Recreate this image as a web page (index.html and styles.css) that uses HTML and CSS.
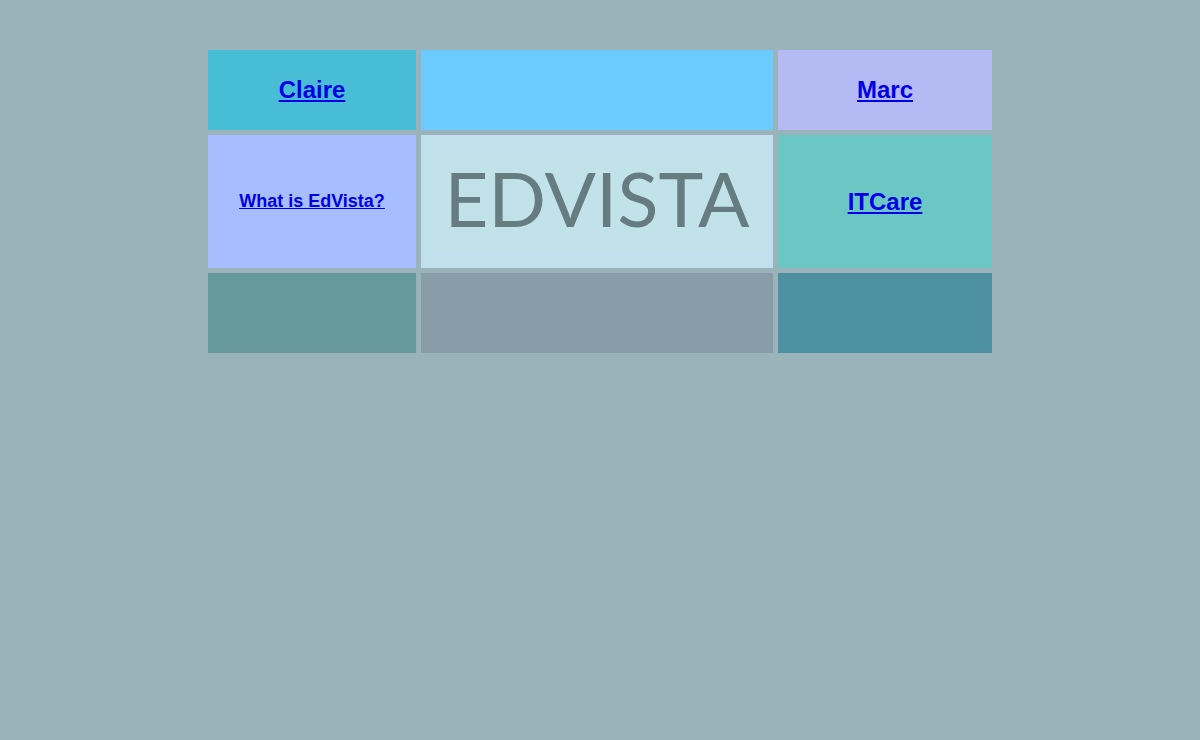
FILE: index.html
```html
<!DOCTYPE html>
<html lang="en">
<head>
    <meta charset="UTF-8">
    <meta name="viewport" content="width=device-width, initial-scale=1.0">
    <title>EdVista</title>
    <link rel="stylesheet" href="styles.css">
</head>
<body>

<div class="container">
    <!-- First row -->
    <div class="box claire"><h2><a href="claire.html">Claire</a></h2></div>
    <div class="box sky"></div>
    <div class="box marc"><h2><a href="marc.html">Marc</a></h2></div>

    <!-- Middle row with the logo -->
    <div class="box about"><h3><a href="about.html">What is EdVista?</a></h3></div>
    <div class="box logo"><h1>EDVISTA</h1></div>
    <div class="box itcare"><h2><a href="itcare.html">ITCare</a></h2></div>

    <!-- Last row -->
    <div class="box green"></div>
    <div class="box gray"></div>
    <div class="box teal"></div>
</div>

</body>
</html>
```

FILE: styles.css
```css
body {
    margin: 0;
    padding: 50px 8px;
    background-color: #9ab2b9;
    font-family: Arial, "Liberation Sans", sans-serif;
}
.container {
    display: grid;
    grid-template-columns: 208fr 352fr 214fr;
    gap: 5px;
    max-width: 784px;
    margin: 0 auto;
}
.box {
    display: flex;
    align-items: center;
    justify-content: center;
    min-width: 0;
    min-height: 80px;
    text-align: center;
}
h1, h2, h3 {
    margin: 0;
}
h2 {
    font-size: 24px;
}
h3 {
    font-size: 18px;
}
a {
    color: #0000e6;
}
.claire {
    background-color: #47bed6;
}
.sky {
    background-color: #6bcbff;
}
.marc {
    background-color: #b4baf3;
}
.about {
    background-color: #a6beff;
}
.logo {
    padding: 17px 6px;
    background-color: #c0e0ed;
}
.logo h1 {
    flex: 1;
    padding-bottom: 8px;
    background-color: #c2e2ea;
    color: #667c80;
    font-family: Papyrus, Lato, sans-serif;
    font-size: 76px;
    font-weight: 400;
    line-height: 91px;
}
.itcare {
    background-color: #6bc7c3;
}
.green {
    background-color: #669999;
}
.gray {
    background-color: #889da8;
}
.teal {
    background-color: #4d90a2;
}
```
